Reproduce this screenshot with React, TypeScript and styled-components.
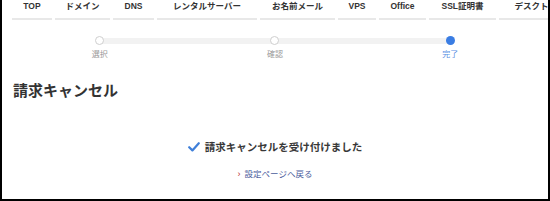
import React from "react";
import styled, { createGlobalStyle } from "styled-components";

const Global = createGlobalStyle`
  html, body { margin: 0; padding: 0; background: #fff; }
  body { font-family: "Liberation Sans", "Noto Sans CJK JP", sans-serif; }
  * { box-sizing: border-box; }
`;

const Frame = styled.div`
  width: 550px;
  height: 201px;
  border: 2px solid #000;
  border-top: none;
  overflow: hidden;
  background: #fff;
  display: flex;
  flex-direction: column;
`;

const Nav = styled.nav`
  display: flex;
  gap: 3px;
  padding-left: 10px;
  white-space: nowrap;
`;

const NavItem = styled.a<{ $w: number }>`
  flex: 0 0 ${(p) => p.$w}px;
  display: flex;
  justify-content: center;
  height: 20px;
  padding-top: 1px;
  line-height: 11px;
  font-size: 8.5px;
  font-weight: 700;
  color: #333;
  text-decoration: none;
  border-bottom: 2px solid #e8e8e8;
`;

const Stepper = styled.ol`
  position: relative;
  list-style: none;
  margin: 16px 0 0;
  padding: 0 10px;
  display: grid;
  grid-template-columns: repeat(3, 1fr);
  &::before {
    content: "";
    position: absolute;
    top: 1.5px;
    left: calc(10px + (100% - 20px) / 6);
    right: calc(10px + (100% - 20px) / 6);
    height: 6px;
    background: #f2f2f2;
  }
`;

const Step = styled.li<{ $active?: boolean }>`
  position: relative;
  display: flex;
  flex-direction: column;
  align-items: center;
  gap: 5px;
  font-size: 8px;
  line-height: 10px;
  color: ${(p) => (p.$active ? "#5b8fe3" : "#9a9a9a")};
`;

const Dot = styled.span<{ $active?: boolean }>`
  width: 9px;
  height: 9px;
  border-radius: 50%;
  background: ${(p) => (p.$active ? "#3a7de3" : "#fff")};
  border: ${(p) => (p.$active ? "none" : "1.5px solid #cfcfcf")};
`;

const Title = styled.h1`
  margin: 22px 0 0;
  padding-left: 11px;
  font-size: 15px;
  line-height: 18px;
  font-weight: 700;
  color: #333;
`;

const Message = styled.p`
  margin: 40px 0 0;
  display: flex;
  justify-content: center;
  align-items: center;
  gap: 5px;
  font-size: 10.5px;
  line-height: 14px;
  font-weight: 700;
  color: #383838;
`;

const BackLink = styled.a`
  margin-top: 14px;
  align-self: center;
  display: flex;
  align-items: center;
  gap: 4px;
  font-size: 8.5px;
  line-height: 12px;
  color: #4b5d9c;
  text-decoration: none;
`;

const Chevron = styled.span`
  color: #b83232;
  font-size: 9px;
`;

const navItems: [string, number][] = [
  ["TOP", 40],
  ["ドメイン", 55],
  ["DNS", 41],
  ["レンタルサーバー", 100],
  ["お名前メール", 75],
  ["VPS", 38],
  ["Office", 47],
  ["SSL証明書", 67],
  ["デスクトップ", 82],
];

export default function App() {
  return (
    <>
      <Global />
      <Frame>
        <Nav>
          {navItems.map(([label, w]) => (
            <NavItem key={label} $w={w} href="#">
              {label}
            </NavItem>
          ))}
        </Nav>
        <Stepper>
          <Step>
            <Dot />
            選択
          </Step>
          <Step>
            <Dot />
            確認
          </Step>
          <Step $active>
            <Dot $active />
            完了
          </Step>
        </Stepper>
        <Title>請求キャンセル</Title>
        <Message>
          <svg width="12" height="10" viewBox="0 0 12 10" aria-hidden="true">
            <polyline
              points="1.2,5.2 4.4,8.4 10.8,1.2"
              fill="none"
              stroke="#3f7fd9"
              strokeWidth="2.2"
              strokeLinecap="round"
              strokeLinejoin="round"
            />
          </svg>
          請求キャンセルを受け付けました
        </Message>
        <BackLink href="#">
          <Chevron>›</Chevron>
          設定ページへ戻る
        </BackLink>
      </Frame>
    </>
  );
}
